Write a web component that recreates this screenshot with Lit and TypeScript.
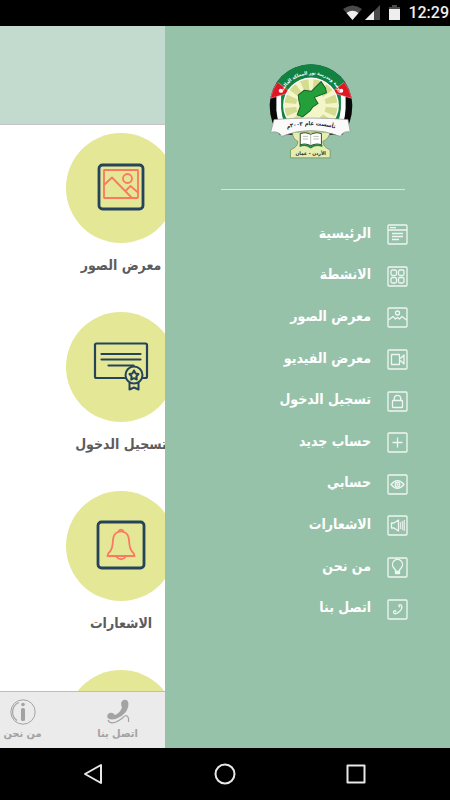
import { LitElement, html, css, svg, nothing } from "lit";
import { customElement } from "lit/decorators.js";

const boxed = (body: unknown) => svg`<rect x="1" y="1" width="19" height="19" rx="1"/>${body}`;

const menu = [
  { label: "الرئيسية", icon: boxed(svg`<path d="M1 6H20M3 3.6H9M5 9.5H16M5 12.5H16M5 15.5H12"/>`) },
  {
    label: "الانشطة",
    icon: boxed(svg`<rect x="4" y="4" width="5.5" height="5.5" rx="1.5"/><rect x="11.5" y="4" width="5.5" height="5.5" rx="1.5"/><rect x="4" y="11.5" width="5.5" height="5.5" rx="1.5"/><rect x="11.5" y="11.5" width="5.5" height="5.5" rx="1.5"/>`),
  },
  { label: "معرض الصور", icon: boxed(svg`<path d="M1.500 13L6 9.500L8.500 12L10.500 10.500L12.500 12L15 9.500L19.500 13"/><circle cx="10.500" cy="6" r="2"/>`) },
  { label: "معرض الفيديو", icon: boxed(svg`<path d="M4.500 5.500H12.500V15.500H4.500ZM12.500 9L14 9L17 6V15L14 12H12.500"/>`) },
  { label: "تسجيل الدخول", icon: boxed(svg`<rect x="5.500" y="9.500" width="10" height="7" rx="0.500"/><path d="M7.300 9.500V7.500A3.200 3.200 0 0 1 13.700 7.500V9.500"/>`) },
  { label: "حساب جديد", icon: boxed(svg`<path d="M10.500 5.500V15.500M5.500 10.500H15.500"/>`) },
  { label: "حسابي", icon: boxed(svg`<path d="M4 10.500Q10.500 2.800 17 10.500Q10.500 18 4 10.500Z"/><circle cx="10.500" cy="10.500" r="2.300"/><circle cx="10.500" cy="10.500" r="0.500"/>`) },
  { label: "الاشعارات", icon: boxed(svg`<path d="M4.500 8H7L11.500 5V16L7 13H4.500Z"/><path class="waves" d="M13.500 7V14M15.500 6V15M17.300 5V16"/>`) },
  { label: "من نحن", icon: boxed(svg`<path d="M8.500 14.500V13L6.500 10.500A5 5 0 1 1 14.500 10.500L12.500 13V14.500Z"/><path class="solid" d="M8.500 14.500H12.500V16.500H8.500Z"/>`) },
  { label: "اتصل بنا", icon: boxed(svg`<path d="M11.500 6.500Q13.500 4.500 14.700 7Q15.500 9.500 12.500 12.500Q9 15.800 7 14.300Q5.600 12.500 8 11.500L9.200 12.800M11.500 6.500L13 8.300"/>`) },
];

const tiles = [
  {
    label: "معرض الصور",
    icon: svg`<rect class="frame" x="10" y="7" width="44" height="44" rx="3.500"/><g class="coral"><rect x="15" y="12" width="34" height="28" rx="0.500"/><path d="M15 27L23 19.500L43 40M36.500 33L41.500 28L49 34.500"/><circle cx="38.500" cy="20.500" r="4.500"/></g>`,
  },
  {
    label: "تسجيل الدخول",
    icon: svg`<g class="thin"><path d="M36 41H7.500Q6 41 6 39.500V8Q6 6.500 7.500 6.500H56.500Q58 6.500 58 8V39.500Q58 41 56.500 41H54M12.500 17H51.500M12.500 22.500H51.500M19.500 28.500H44.500"/></g><g class="navy"><path d="M40.500 45.500V52.500L45 50.500L49.500 52.500V45.500"/><circle cx="45" cy="38" r="8.500"/><path d="M45 33.500L46.600 36.400L49.500 37L47.400 39.400L47.800 42.500L45 41.200L42.200 42.500L42.600 39.400L40.500 37L43.400 36.400Z"/></g>`,
  },
  {
    label: "الاشعارات",
    icon: svg`<rect class="frame" x="9" y="6" width="46" height="46" rx="3.500"/><g class="coral"><path d="M29 16Q24.500 17.500 24 24Q23.500 33 21 35.500Q18.500 37.500 18.500 40H45.500Q45.500 37.500 43 35.500Q40.500 33 40 24Q39.500 17.500 35 16Q32 14.800 29 16Z"/><path d="M29.500 15.500A2.600 2.600 0 0 1 34.500 15.500M26.500 40Q32 46.500 37.500 40"/></g>`,
  },
  { label: "", icon: nothing },
];

const rays = Array.from({ length: 12 }, (_, i) => {
  const a = (i * Math.PI) / 6;
  const p = (t: number) => `${(153 + 79 * Math.cos(t)).toFixed(1)} ${(151 + 79 * Math.sin(t)).toFixed(1)}`;
  return svg`<path fill="#f4f6c9" d="M153 151L${p(a - 0.1)}L${p(a + 0.1)}Z"/>`;
});

const emblem = svg`
  <path fill="#090909" d="M30 150A123 121 0 0 1 276 150Q276 205 246 238H60Q30 205 30 150Z"/>
  <path fill="#fff" d="M50 105V165Q54 210 72 230H234Q254 205 256 160V105Z"/>
  <path fill="#128242" d="M64 110V160Q68 205 90 228H216Q238 205 242 160V110Z"/>
  <path fill="#128242" d="M53 79A123 121 0 0 1 253 79L236 112H70Z"/>
  <path fill="#df1624" stroke="#fff" stroke-width="1" d="M54 82L93 112L32 130Q38 102 54 82ZM252 82L213 112L274 130Q268 102 252 82Z"/>
  <circle cx="63" cy="107" r="6" fill="#fff"/><circle cx="243" cy="107" r="6" fill="#fff"/>
  <circle cx="153" cy="151" r="83" fill="#fff"/>
  <circle cx="153" cy="151" r="79" fill="#d5dc91"/>
  ${rays}
  <circle cx="153" cy="151" r="44" fill="#f4f6c9"/>
  <path fill="#23a03a" stroke="#17602a" stroke-width="3" stroke-linejoin="round" d="M183 80L196 99L199 113L163 127L174 145L159 155L150 167L128 185L112 179L121 154L117 137L115 120L132 106L154 109Z"/>
  <path fill="#e6edb0" stroke="#66884a" stroke-width="2" d="M97 230H210Q207 250 188 258Q189 275 210 283V307H92V283Q114 275 114 258Q99 252 97 230Z"/>
  <path fill="#fff" stroke="#3c5134" stroke-width="3" stroke-linejoin="round" d="M121 235Q138 228 152 237Q167 228 184 235V268Q167 262 152 271Q138 262 121 268Z"/>
  <path fill="none" stroke="#96a38e" stroke-width="2" d="M152 237V270M129 243L144 243M129 251L144 251M160 243H176M160 251H176"/>
  <path fill="none" stroke="#188743" stroke-width="5" d="M119 272Q137 265 152 276Q168 265 187 272"/>
  <path fill="#fafafa" stroke="#8b948d" stroke-width="2" stroke-linejoin="round" d="M43 193Q153 184 263 193L270 230Q250 225 240 243Q151 208 66 243Q55 225 33 231Z"/>
  <path id="arc-top" fill="none" d="M61 133A94 94 0 0 1 245 133"/>
  <path id="arc-ribbon" fill="none" d="M60 226Q151 194 246 226"/>
  <text class="on-green"><textPath href="#arc-top" startOffset="50%">روضة ومدرسة نور المملكة العالمية</textPath></text>
  <text class="on-ribbon"><textPath href="#arc-ribbon" startOffset="50%">تأسست عام ٢٠٠٣م</textPath></text>
  <text class="on-base" x="152" y="299">الأردن - عمان</text>`;

@customElement("app-root")
export class AppRoot extends LitElement {
  static styles = css`
    :host {
      display: flex;
      flex-direction: column;
      height: 100vh;
      overflow: hidden;
      background: #fff;
      font-family: "DejaVu Sans Condensed", "DejaVu Sans", sans-serif;
    }
    * { box-sizing: border-box; }
    svg { display: block; flex: none; }
    a { color: inherit; text-decoration: none; }
    ul { list-style: none; margin: 0; padding: 0; }

    .status {
      display: flex;
      flex: none;
      align-items: center;
      justify-content: flex-end;
      height: 26px;
      padding-right: 1px;
      background: #000;
      color: #eee;
      font: 500 16px/26px Roboto, sans-serif;
    }
    .status svg { margin-right: 6px; }

    .stage { display: flex; flex: 1; min-height: 0; }
    .page {
      display: flex;
      flex: 1;
      flex-direction: column;
      min-width: 0;
      overflow: hidden;
    }
    .page-head { flex: none; height: 99px; background: #c3dbcf; border-bottom: 1px solid #c4c4c4; }
    .tiles { flex: 1; min-height: 0; overflow: hidden; padding: 8px 0 0 66px; }
    .tile {
      display: flex;
      flex-direction: column;
      align-items: center;
      gap: 10px;
      width: 110px;
      height: 179px;
      color: #5c5c5c;
      font-size: 14px;
      font-weight: bold;
      line-height: 24px;
      white-space: nowrap;
    }
    .disc {
      display: grid;
      place-items: center;
      flex: none;
      width: 110px;
      height: 110px;
      border-radius: 50%;
      background: #e4e796;
    }
    .disc svg { fill: none; stroke-linejoin: round; stroke-linecap: round; }
    .frame { stroke: #25445b; stroke-width: 2.8; }
    .thin { stroke: #25445b; stroke-width: 2.2; }
    .navy { stroke: #25445b; stroke-width: 2; fill: #e4e796; }
    .coral { stroke: #fb7861; stroke-width: 1.8; }

    .tabs {
      display: flex;
      flex: none;
      justify-content: flex-end;
      height: 57px;
      padding-top: 6px;
      border-top: 1px solid #bdbdbd;
      background: #ebebeb;
    }
    .tab {
      display: flex;
      flex: none;
      flex-direction: column;
      align-items: center;
      width: 95px;
      color: #a3a3a3;
      font-size: 11px;
      font-weight: bold;
      line-height: 16px;
    }

    .drawer {
      flex: none;
      width: 285px;
      padding: 38px 42px 0 56px;
      background: #97c2aa;
      color: #fff;
    }
    .emblem { margin-left: 48px; }
    .emblem text { font-weight: bold; text-anchor: middle; }
    .emblem .on-green { fill: #fff; font-size: 14px; }
    .emblem .on-ribbon { fill: #222; font-size: 17px; }
    .emblem .on-base { fill: #222; font-size: 15px; }
    .rule { height: 1px; margin: 30px 3px 0 0; border: 0; background: #d5e7dd; }
    .menu { display: grid; grid-auto-rows: 1fr; height: 416px; margin-top: 24px; }
    .entry {
      display: flex;
      align-items: center;
      gap: 16px;
      height: 100%;
      font-size: 14px;
      font-weight: bold;
      line-height: 24px;
    }
    .entry span { padding-bottom: 4px; }
    .entry svg { fill: none; stroke: #fff; stroke-width: 1.3; stroke-linejoin: round; opacity: 0.85; }
    .solid { fill: #fff; }
    .waves { opacity: 0.8; }

    .keys {
      display: flex;
      flex: none;
      align-items: center;
      justify-content: center;
      gap: 99px;
      height: 52px;
      background: #000;
    }
    .key { padding: 0; border: 0; background: none; }
    .key svg { width: 32px; height: 32px; fill: none; stroke: #e8e8e8; stroke-width: 2; stroke-linejoin: round; }
  `;

  render() {
    return html`
      <header class="status">
        <svg width="60" height="20" viewBox="0 0 60 20" aria-hidden="true">
          <path fill="#4a4a4a" d="M1 6Q10.500 -1 20 6L10.500 17Z" />
          <path fill="#eee" d="M4.500 10Q10.500 5.500 16.500 10L10.500 17Z" />
          <path fill="#4a4a4a" d="M38 2V17H23Z" />
          <path fill="#eee" d="M32 8V17H23Z" />
          <path fill="#4a4a4a" d="M50 2H55V4H58V6H47V4H50Z" />
          <path fill="#eee" d="M47 6H58V17H47Z" />
        </svg>
        <time>12:29</time>
      </header>
      <div class="stage">
        <main class="page">
          <div class="page-head"></div>
          <ul class="tiles">
            ${tiles.map(
              (t) => html`<li>
                <a class="tile" href="#">
                  <span class="disc"><svg width="64" height="60" viewBox="0 0 64 60" aria-hidden="true">${t.icon}</svg></span>
                  <span dir="rtl">${t.label}</span>
                </a>
              </li>`
            )}
          </ul>
          <nav class="tabs">
            <a class="tab" href="#">
              <svg width="28" height="28" viewBox="0 0 28 28" fill="none" stroke="#a3a3a3" aria-hidden="true">
                <circle cx="14" cy="14" r="12.200" stroke-width="1" />
                <path d="M10 4.500A10.300 10.300 0 0 0 8 22.500" stroke-width="1.200" />
                <circle cx="14" cy="6.500" r="1.800" fill="#a3a3a3" stroke="none" />
                <rect x="12" y="10" width="4" height="13" rx="1.500" fill="#a3a3a3" stroke="none" />
              </svg>
              <span dir="rtl">من نحن</span>
            </a>
            <a class="tab" href="#">
              <svg width="28" height="28" viewBox="0 0 28 28" fill="none" aria-hidden="true">
                <path fill="#a3a3a3" d="M19.500 2Q24 1 24.500 6Q24.500 13 17.500 18Q11 22.500 5 21Q2 19 4 16Q8 13 11 17Q16 15 18 9.500Q15.500 4 19.500 2Z" />
                <path stroke="#a3a3a3" stroke-width="1.200" d="M4 22Q6 26.500 12 24Q16 22 18.500 20Q22 16 24 19Q25 21 24.500 24" />
              </svg>
              <span dir="rtl">اتصل بنا</span>
            </a>
          </nav>
        </main>
        <aside class="drawer">
          <svg class="emblem" width="84" height="95" viewBox="28 28 250 282" role="img" aria-label="شعار المدرسة">${emblem}</svg>
          <hr class="rule" />
          <nav>
            <ul class="menu" dir="rtl">
              ${menu.map(
                (m) => html`<li>
                  <a class="entry" href="#">
                    <svg width="21" height="21" viewBox="0 0 21 21" aria-hidden="true">${m.icon}</svg>
                    <span>${m.label}</span>
                  </a>
                </li>`
              )}
            </ul>
          </nav>
        </aside>
      </div>
      <footer class="keys">
        <button class="key" aria-label="رجوع"><svg viewBox="0 0 32 32"><path d="M7 16L23 7V25Z" /></svg></button>
        <button class="key" aria-label="الشاشة الرئيسية"><svg viewBox="0 0 32 32"><circle cx="16" cy="16" r="9.500" /></svg></button>
        <button class="key" aria-label="التطبيقات الأخيرة"><svg viewBox="0 0 32 32"><path d="M7.500 7.500H24.500V24.500H7.500Z" /></svg></button>
      </footer>
    `;
  }
}
